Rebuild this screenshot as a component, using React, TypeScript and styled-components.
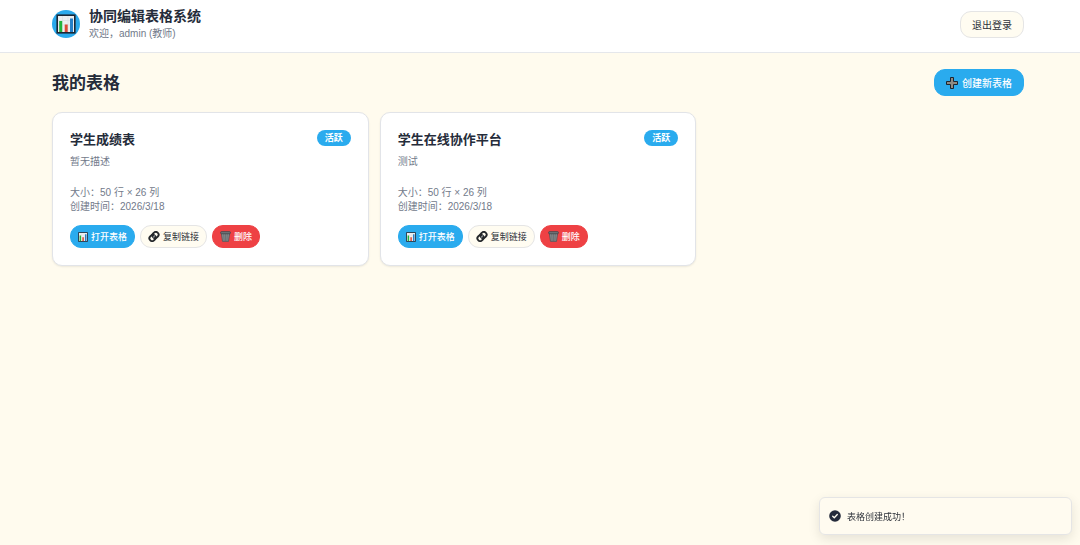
import React from "react";
import styled, { createGlobalStyle, css } from "styled-components";

const GlobalStyle = createGlobalStyle`
  *, *::before, *::after { box-sizing: border-box; }
  body {
    margin: 0;
    background: #fffbee;
    color: #252c3a;
    font-family: "Liberation Sans", "Noto Sans CJK SC", sans-serif;
  }
  h1, h2, h3, p { margin: 0; }
`;

const Page = styled.div`
  min-height: 100vh;
`;

const Header = styled.header`
  display: flex;
  align-items: center;
  justify-content: space-between;
  padding: 6px 56px 10px 52px;
  background: #fff;
  border-bottom: 1px solid #e5e7eb;
`;

const Brand = styled.div`
  display: flex;
  align-items: center;
  gap: 9px;
`;

const Logo = styled.div`
  display: flex;
  align-items: center;
  justify-content: center;
  width: 28px;
  height: 28px;
  border-radius: 50%;
  background: #2aa9ec;
`;

const SiteTitle = styled.h1`
  font-size: 14px;
  line-height: 20px;
  font-weight: 700;
`;

const Welcome = styled.p`
  font-size: 10px;
  line-height: 16px;
  color: #727a8a;
`;

type Variant = "primary" | "outline" | "danger";

const variants = {
  primary: css`
    background: #2aabee;
    border-color: #2aabee;
    color: #fff;
    font-weight: 500;
  `,
  outline: css`
    background: #fffcf1;
    border-color: #e5e5e5;
    color: #2c3038;
    font-weight: 400;
  `,
  danger: css`
    background: #ee4144;
    border-color: #ee4144;
    color: #fff;
    font-weight: 500;
  `,
};

const Button = styled.button<{ $variant: Variant; $small?: boolean }>`
  display: inline-flex;
  align-items: center;
  justify-content: center;
  gap: ${(p) => (p.$small ? 3 : 4)}px;
  height: ${(p) => (p.$small ? 23 : 27)}px;
  padding: 0 ${(p) => (p.$small ? 7 : 11)}px;
  border: 1px solid;
  border-radius: 11px;
  font-family: inherit;
  font-size: ${(p) => (p.$small ? 9 : 10)}px;
  white-space: nowrap;
  cursor: pointer;
  ${(p) => variants[p.$variant]}
`;

const Main = styled.main`
  padding: 16px 56px 16px 52px;
`;

const SectionBar = styled.div`
  display: flex;
  align-items: flex-start;
  justify-content: space-between;
  margin-bottom: 14px;
`;

const SectionTitle = styled.h2`
  font-size: 17px;
  line-height: 29px;
  font-weight: 700;
`;

const CardGrid = styled.div`
  display: grid;
  grid-template-columns: repeat(3, minmax(0, 1fr));
  gap: 11px;
`;

const Card = styled.article`
  padding: 17px;
  background: #fff;
  border: 1px solid #e2e4e8;
  border-radius: 10px;
  box-shadow: 0 1px 2px rgba(0, 0, 0, 0.08);
`;

const CardHead = styled.div`
  display: flex;
  align-items: flex-start;
  justify-content: space-between;
`;

const CardTitle = styled.h3`
  font-size: 13px;
  line-height: 20px;
  font-weight: 700;
`;

const Badge = styled.span`
  padding: 0 8px;
  border-radius: 8px;
  background: #2aabee;
  color: #fff;
  font-size: 9px;
  line-height: 16px;
  font-weight: 700;
`;

const Description = styled.p`
  margin-bottom: 12px;
  font-size: 10px;
  line-height: 24px;
  color: #727a8a;
`;

const Meta = styled.p`
  font-size: 10px;
  line-height: 14px;
  color: #727a8a;
`;

const Actions = styled.div`
  display: flex;
  gap: 5px;
  margin-top: 11px;
`;

const Toast = styled.div`
  position: fixed;
  right: 8px;
  bottom: 10px;
  display: flex;
  align-items: center;
  gap: 6px;
  width: 253px;
  height: 38px;
  padding: 0 9px;
  background: #fffbf0;
  border: 1px solid #e5e5e5;
  border-radius: 6px;
  box-shadow: 0 4px 12px rgba(0, 0, 0, 0.1);
  font-size: 9px;
  color: #2c3038;
`;

const ChartIcon = ({ size }: { size: number }) => (
  <svg width={size} height={size} viewBox="0 0 20 20" aria-hidden="true">
    <rect x="1.200" y="1.200" width="17.600" height="17.600" fill="#eceff1" stroke="#1b2735" strokeWidth="1.600" />
    <path d="M2 6.500h16M2 11h16M6.500 2v16M12 2v16" stroke="#d8dde2" strokeWidth=".6" />
    <rect x="3.200" y="7" width="3" height="11" fill="#22b33c" />
    <rect x="8.700" y="10.500" width="3" height="7.500" fill="#dd4936" />
    <rect x="14" y="4.500" width="3" height="13.500" fill="#2580c9" />
  </svg>
);

const PlusIcon = () => (
  <svg width="12" height="12" viewBox="0 0 12 12" aria-hidden="true">
    <path
      d="M4.500.5h3v4h4v3h-4v4h-3v-4h-4v-3h4z"
      fill="#8f8a82"
      stroke="#1b2530"
      strokeWidth="1"
      strokeLinejoin="round"
    />
  </svg>
);

const LinkIcon = () => (
  <svg width="12" height="11" viewBox="-.5 0 12 11" fill="none" aria-hidden="true">
    <g transform="rotate(-45 5.500 5.500)">
      <rect x=".2" y="2.800" width="6.400" height="5.400" rx="2.600" stroke="#24272b" strokeWidth="1.900" />
      <rect x="4.400" y="2.800" width="6.400" height="5.400" rx="2.600" stroke="#24272b" strokeWidth="1.900" />
      <path d="M3.800 5.500h3.400" stroke="#8d9194" strokeWidth="1" />
    </g>
  </svg>
);

const TrashIcon = () => (
  <svg width="11" height="11" viewBox="0 0 11 11" aria-hidden="true">
    <path d="M1.300 2.300h8.400L8.500 10.400h-6z" fill="#85898b" stroke="#4c5256" strokeWidth=".7" />
    <path d="M3.700 3l.4 7M5.500 3v7M7.300 3l-.4 7" stroke="#565c60" strokeWidth=".5" />
    <rect x=".6" y=".6" width="9.800" height="2.200" rx="1" fill="#6e7478" stroke="#3c4246" strokeWidth=".7" />
  </svg>
);

const CheckIcon = () => (
  <svg width="12" height="12" viewBox="0 0 12 12" aria-hidden="true">
    <circle cx="6" cy="6" r="5.800" fill="#242a3a" />
    <path
      d="M3.700 6.200l1.600 1.600 3-3.300"
      fill="none"
      stroke="#fffbf0"
      strokeWidth="1.300"
      strokeLinecap="round"
      strokeLinejoin="round"
    />
  </svg>
);

const sheets = [
  { title: "学生成绩表", description: "暂无描述", rows: 50, cols: 26, created: "2026/3/18" },
  { title: "学生在线协作平台", description: "测试", rows: 50, cols: 26, created: "2026/3/18" },
];

export default function App() {
  return (
    <Page>
      <GlobalStyle />
      <Header>
        <Brand>
          <Logo>
            <ChartIcon size={20} />
          </Logo>
          <div>
            <SiteTitle>协同编辑表格系统</SiteTitle>
            <Welcome>欢迎，admin (教师)</Welcome>
          </div>
        </Brand>
        <Button $variant="outline">退出登录</Button>
      </Header>
      <Main>
        <SectionBar>
          <SectionTitle>我的表格</SectionTitle>
          <Button $variant="primary">
            <PlusIcon />
            创建新表格
          </Button>
        </SectionBar>
        <CardGrid>
          {sheets.map((sheet) => (
            <Card key={sheet.title}>
              <CardHead>
                <CardTitle>{sheet.title}</CardTitle>
                <Badge>活跃</Badge>
              </CardHead>
              <Description>{sheet.description}</Description>
              <Meta>{`大小：${sheet.rows} 行 × ${sheet.cols} 列`}</Meta>
              <Meta>{`创建时间：${sheet.created}`}</Meta>
              <Actions>
                <Button $variant="primary" $small>
                  <ChartIcon size={10} />
                  打开表格
                </Button>
                <Button $variant="outline" $small>
                  <LinkIcon />
                  复制链接
                </Button>
                <Button $variant="danger" $small>
                  <TrashIcon />
                  删除
                </Button>
              </Actions>
            </Card>
          ))}
        </CardGrid>
      </Main>
      <Toast role="status">
        <CheckIcon />
        <span>表格创建成功！</span>
      </Toast>
    </Page>
  );
}
